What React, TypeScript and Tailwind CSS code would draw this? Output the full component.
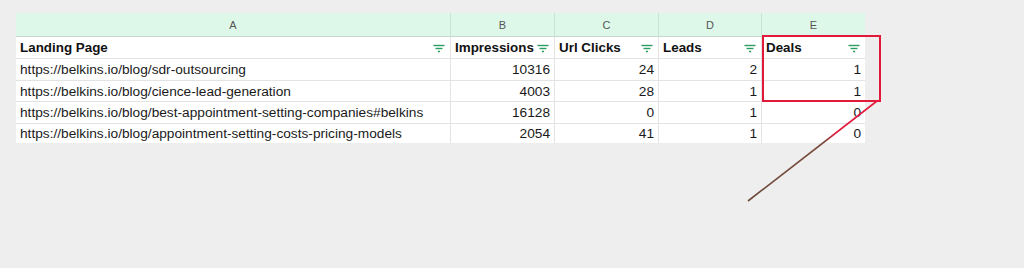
import React from 'react';

type Row = { url: string; imp: number; clicks: number; leads: number; deals: number; h: string };

const rows: Row[] = [
  { url: 'https://belkins.io/blog/sdr-outsourcing', imp: 10316, clicks: 24, leads: 2, deals: 1, h: 'h-[22px]' },
  { url: 'https://belkins.io/blog/cience-lead-generation', imp: 4003, clicks: 28, leads: 1, deals: 1, h: 'h-[21px]' },
  { url: 'https://belkins.io/blog/best-appointment-setting-companies#belkins', imp: 16128, clicks: 0, leads: 1, deals: 0, h: 'h-[22px]' },
  { url: 'https://belkins.io/blog/appointment-setting-costs-pricing-models', imp: 2054, clicks: 41, leads: 1, deals: 0, h: 'h-[19px]' },
];

const FilterIcon = () => (
  <svg width="12" height="9" viewBox="0 0 12 9" className="shrink-0">
    <line x1="0.5" y1="1.5" x2="11.5" y2="1.5" stroke="#2a9d62" strokeWidth="1.4" />
    <line x1="2.5" y1="4.5" x2="9.5" y2="4.5" stroke="#2a9d62" strokeWidth="1.4" />
    <line x1="5" y1="7.5" x2="7" y2="7.5" stroke="#2a9d62" strokeWidth="1.4" />
  </svg>
);

const cols = ['A', 'B', 'C', 'D', 'E'];
const widths = ['w-[435px]', 'w-[104px]', 'w-[104px]', 'w-[103px]', 'w-[103px]'];
const heads = ['Landing Page', 'Impressions', 'Url Clicks', 'Leads', 'Deals'];

export default function App() {
  return (
    <div
      className="relative w-[1024px] h-[268px] overflow-hidden bg-[#efeeef] pt-[13px] pl-[16px]"
      style={{ fontFamily: '"Liberation Sans", Arial, sans-serif' }}
    >
      <div className="flex flex-col w-[849px]">
        {/* column letters */}
        <div className="flex h-[24px] bg-[#ddf8e8] border-b border-[#c8d6cd]">
          {cols.map((c, i) => (
            <div
              key={c}
              className={`${widths[i]} flex items-center justify-center pt-[2px] text-[11px] text-[#555] border-r border-[#c9e2d3] last:border-r-0`}
            >
              {c}
            </div>
          ))}
        </div>

        {/* header row */}
        <div className="flex h-[22px] bg-white border-b border-[#e3e3e3]">
          {heads.map((h, i) => (
            <div
              key={h}
              className={`${widths[i]} flex items-center justify-between pt-[2px] pl-[4px] pr-[5px] text-[13.4px] font-bold text-[#111] border-r border-[#e3e3e3] last:border-r-0`}
            >
              <span>{h}</span>
              <FilterIcon />
            </div>
          ))}
        </div>

        {rows.map((r) => (
          <div key={r.url} className={`flex ${r.h} bg-white border-b border-[#e3e3e3] last:border-b-0 overflow-hidden`}>
            <div className="w-[435px] flex items-center pt-[2px] pl-[4px] text-[13.7px] text-[#1a1a1a] border-r border-[#e3e3e3]">
              {r.url}
            </div>
            {[r.imp, r.clicks, r.leads, r.deals].map((v, i) => (
              <div
                key={i}
                className={`${widths[i + 1]} flex items-center justify-end pt-[2px] pr-[4px] text-[13.7px] text-[#1a1a1a] border-r border-[#e3e3e3] last:border-r-0`}
              >
                {v}
              </div>
            ))}
          </div>
        ))}
      </div>

      {/* highlight box */}
      <div className="absolute left-[762px] top-[35px] w-[119px] h-[67px] border-2 border-[#e3193c]" />

      {/* pointer line */}
      <svg className="absolute left-0 top-0 pointer-events-none" width="1024" height="268">
        <defs>
          <linearGradient id="ln" x1="877" y1="101" x2="748" y2="201" gradientUnits="userSpaceOnUse">
            <stop offset="0" stopColor="#e3193c" />
            <stop offset="0.33" stopColor="#e3193c" />
            <stop offset="0.4" stopColor="#7a4a3c" />
            <stop offset="1" stopColor="#6a4a3a" />
          </linearGradient>
        </defs>
        <line x1="877" y1="101" x2="748" y2="201" stroke="url(#ln)" strokeWidth="1.6" />
      </svg>
    </div>
  );
}
